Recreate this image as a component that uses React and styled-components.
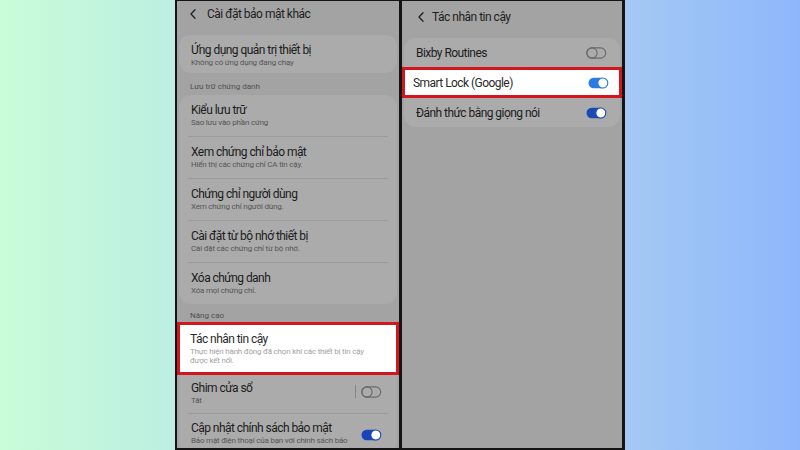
import React from 'react'
import styled, { createGlobalStyle } from 'styled-components'

const GlobalStyle = createGlobalStyle`
  html, body { margin: 0; padding: 0; }
  body { font-family: Roboto, "Noto Sans", sans-serif; }
`

const Page = styled.div`
  width: 800px;
  height: 450px;
  display: flex;
  justify-content: center;
  background: linear-gradient(90deg, #c9fcd8 0%, #bcefe1 22%, #a4c9f4 78%, #8eb7fb 100%);
`

const Frame = styled.div`
  display: flex;
  gap: 3px;
  box-sizing: border-box;
  width: 450px;
  height: 450px;
  background: #141414;
  border: solid #141414;
  border-width: 1px 3px 2px 2px;
`

const Phone = styled.section`
  width: ${(p) => p.$w}px;
  flex: none;
  background: #a3a3a3;
  overflow: hidden;
`

const Header = styled.header`
  display: flex;
  align-items: flex-start;
  gap: ${(p) => p.$gap}px;
  height: ${(p) => p.$h}px;
  box-sizing: border-box;
  padding: ${(p) => p.$pt}px 0 0 ${(p) => p.$pl}px;
  font-size: 12px;
  line-height: 16px;
  letter-spacing: -0.5px;
  color: #1e1e1e;
  svg { margin-top: 3px; }
`

const Card = styled.div`
  margin: 0 2px;
  background: #ababab;
  border-radius: 12px;
`

const Section = styled.div`
  padding: ${(p) => p.$pad};
  font-size: 8px;
  line-height: 10px;
  color: #505050;
`

const Item = styled.div`
  display: flex;
  align-items: center;
  justify-content: space-between;
  box-sizing: border-box;
  height: ${(p) => (p.$h ? `${p.$h}px` : 'auto')};
  padding: ${(p) => p.$pad || '7px 15px 8px 12px'};
`

const Highlight = styled(Item)`
  margin: 0 -2px;
  background: #fff;
  border: 3px solid #d3151d;
`

const Texts = styled.div`
  display: flex;
  flex-direction: column;
`

const Title = styled.div`
  font-size: 12px;
  line-height: 16px;
  letter-spacing: -0.55px;
  color: ${(p) => (p.$light ? '#2a2a2a' : '#1c1c1c')};
  white-space: nowrap;
`

const Sub = styled.div`
  font-size: 8px;
  line-height: ${(p) => p.$lh || 10}px;
  letter-spacing: -0.2px;
  color: ${(p) => (p.$light ? '#a2a2a2' : '#565656')};
  white-space: nowrap;
`

const Divider = styled.hr`
  margin: 0 9px;
  border: none;
  border-top: 1px solid #9a9a9a;
`

const Trailing = styled.div`
  display: flex;
  align-items: center;
  gap: 5px;
  margin-top: ${(p) => p.$dy || 0}px;
`

const VLine = styled.span`
  width: 1px;
  height: 13px;
  background: #858585;
`

const Back = () => (
  <svg width="6" height="10" viewBox="0 0 6 10">
    <polyline points="5,0.8 1,5 5,9.2" fill="none" stroke="#222" strokeWidth="1.3" strokeLinecap="round" strokeLinejoin="round" />
  </svg>
)

const Toggle = ({ on, color = '#1b4cb6' }) => (
  <svg width="21" height="12" viewBox="0 0 21 12">
    {on ? (
      <>
        <rect x="0.5" y="0.8" width="19" height="10.4" rx="5.2" fill={color} />
        <circle cx="14.8" cy="6" r="5" fill="#fff" stroke={color} strokeWidth="1.1" />
      </>
    ) : (
      <>
        <rect x="0.7" y="0.9" width="19" height="10.2" rx="5.1" fill="none" stroke="#6a6a6a" strokeWidth="1.1" />
        <circle cx="6" cy="6" r="5.1" fill="none" stroke="#6a6a6a" strokeWidth="1.1" />
      </>
    )}
  </svg>
)

const certRows = [
  ['Kiểu lưu trữ', 'Sao lưu vào phần cứng'],
  ['Xem chứng chỉ bảo mật', 'Hiển thị các chứng chỉ CA tin cậy.'],
  ['Chứng chỉ người dùng', 'Xem chứng chỉ người dùng.'],
  ['Cài đặt từ bộ nhớ thiết bị', 'Cài đặt các chứng chỉ từ bộ nhớ.'],
  ['Xóa chứng danh', 'Xóa mọi chứng chỉ.'],
]

export default function App() {
  return (
    <Page>
      <GlobalStyle />
      <Frame>
        <Phone $w={222}>
          <Header $h={34} $pt={5} $pl={13} $gap={11}>
            <Back />
            <span>Cài đặt bảo mật khác</span>
          </Header>
          <Card>
            <Item $pad="7px 12px 5px">
              <Texts>
                <Title>Ứng dụng quản trị thiết bị</Title>
                <Sub>Không có ứng dụng đang chạy</Sub>
              </Texts>
            </Item>
          </Card>
          <Section $pad="9px 13px 3px">Lưu trữ chứng danh</Section>
          <Card>
            {certRows.map(([t, s], i) => (
              <React.Fragment key={t}>
                {i > 0 && <Divider />}
                <Item>
                  <Texts>
                    <Title>{t}</Title>
                    <Sub>{s}</Sub>
                  </Texts>
                </Item>
              </React.Fragment>
            ))}
          </Card>
          <Section $pad="7px 13px 1px">Nâng cao</Section>
          <Card>
            <Highlight $pad="6px 10px 7px">
              <Texts>
                <Title $light>Tác nhân tin cậy</Title>
                <Sub $light $lh={9}>
                  Thực hiện hành động đã chọn khi các thiết bị tin cậy
                  <br />
                  được kết nối.
                </Sub>
              </Texts>
            </Highlight>
            <Item $pad="5px 15px 7px 12px">
              <Texts>
                <Title>Ghim cửa sổ</Title>
                <Sub>Tắt</Sub>
              </Texts>
              <Trailing $dy={-3}>
                <VLine />
                <Toggle />
              </Trailing>
            </Item>
            <Divider />
            <Item $pad="6px 15px 8px 12px">
              <Texts>
                <Title>Cập nhật chính sách bảo mật</Title>
                <Sub>Bảo mật điện thoại của bạn với chính sách bảo</Sub>
              </Texts>
              <Trailing $dy={3}>
                <Toggle on color="#1846b8" />
              </Trailing>
            </Item>
          </Card>
        </Phone>

        <Phone $w={220}>
          <Header $h={37} $pt={8} $pl={16} $gap={8}>
            <Back />
            <span>Tác nhân tin cậy</span>
          </Header>
          <Card>
            <Item $h={29} $pad="0 13px 0 12px">
              <Title>Bixby Routines</Title>
              <Toggle />
            </Item>
            <Highlight $h={31} $pad="0 10px 0 8px">
              <Title $light>Smart Lock (Google)</Title>
              <Toggle on color="#2b7be6" />
            </Highlight>
            <Item $h={29} $pad="0 13px 0 12px">
              <Title>Đánh thức bằng giọng nói</Title>
              <Toggle on color="#1a4bb5" />
            </Item>
          </Card>
        </Phone>
      </Frame>
    </Page>
  )
}
